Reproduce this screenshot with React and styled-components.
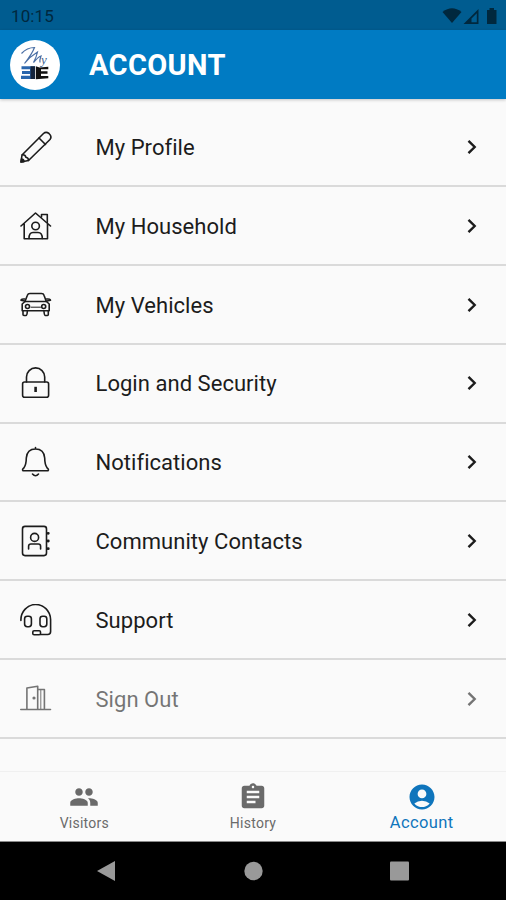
import React from 'react'
import styled, { createGlobalStyle } from 'styled-components'
import { MdPeople, MdAssignment, MdAccountCircle } from 'react-icons/md'

const GlobalStyle = createGlobalStyle`
  * {
    box-sizing: border-box;
  }

  body {
    margin: 0;
    background-color: #fafafa;
    font-family: Roboto, 'Liberation Sans', sans-serif;
  }
`

const Screen = styled.div`
  display: flex;
  flex-direction: column;
  width: 506px;
  height: 900px;
  overflow: hidden;
  background-color: #fafafa;
`

const StatusBar = styled.div`
  display: flex;
  align-items: center;
  justify-content: space-between;
  height: 30px;
  flex: none;
  padding: 2px 8px 0 11px;
  background-color: #005c90;
  color: #00283e;
`

const Clock = styled.span`
  font-size: 17px;
  letter-spacing: 0.1px;
`

const StatusIcons = styled.svg`
  width: 56px;
  height: 18px;
  fill: currentColor;
`

const Header = styled.header`
  display: flex;
  align-items: center;
  height: 69px;
  flex: none;
  padding: 0 10px;
  background-color: #007bc3;
  box-shadow: 0 1px 3px rgba(0, 0, 0, 0.22);
`

const Logo = styled.svg`
  width: 50px;
  height: 50px;
  flex: none;
`

const Title = styled.h1`
  margin: 0 0 0 29px;
  font-size: 29px;
  line-height: 34px;
  font-weight: 700;
  letter-spacing: 0.35px;
  color: #fff;
`

const Menu = styled.ul`
  flex: 1;
  margin: 0;
  padding: 9.4px 0 0;
  list-style: none;
`

const MenuItem = styled.li`
  display: flex;
  align-items: center;
  height: 78.8px;
  padding: 2.4px 24px 0 20px;
  border-bottom: 2px solid #dadada;
  color: #1c1c1c;

  > * {
    opacity: ${({ $muted }) => ($muted ? 0.6 : 1)};
  }
`

const ItemIcon = styled.svg`
  width: 32px;
  height: 32px;
  flex: none;
  margin-bottom: 2px;
  fill: none;
  stroke: currentColor;
  stroke-width: 1.6;
  stroke-linecap: round;
  stroke-linejoin: round;
`

const ItemLabel = styled.span`
  flex: 1;
  margin-left: 43.5px;
  font-size: 22px;
  line-height: 26px;
  letter-spacing: 0.04px;
`

const Chevron = styled.svg`
  width: 20px;
  height: 20px;
  margin-bottom: 2px;
  fill: none;
  stroke: currentColor;
  stroke-width: 2.4;
`

const TabBar = styled.nav`
  display: grid;
  grid-template-columns: repeat(3, 1fr);
  height: 71px;
  flex: none;
  border-top: 1px solid #f0f0f0;
  border-bottom: 1px solid #8a8a8a;
`

const Tab = styled.div`
  display: flex;
  flex-direction: column;
  align-items: center;
  padding-top: 10px;
  color: ${({ $active }) => ($active ? '#0f75bc' : '#6a6a6a')};

  svg {
    width: 30px;
    height: 30px;
  }
`

const TabLabel = styled.span`
  margin-top: 1px;
  font-size: ${({ $active }) => ($active ? '16.5px' : '14px')};
  line-height: 20px;
  letter-spacing: ${({ $active }) => ($active ? '0.4px' : '0.25px')};
`

const SystemNav = styled.div`
  display: flex;
  align-items: center;
  justify-content: space-between;
  height: 58px;
  flex: none;
  padding: 0 96px;
  background-color: #000;

  svg {
    width: 20px;
    height: 22px;
    fill: #999;
  }
`

const PencilIcon = () => (
  <ItemIcon viewBox="0 0 32 32">
    <path d="M1 31L2 24L23.5 2.5Q26 .3 29 2.5Q32.3 5.5 30 8.5L8.5 29.5Z" />
    <path d="M19 7L25.5 13.5M2.3 23.8Q5.5 23.6 5.8 26.2Q8.6 26.5 8.5 29.5" />
    <path d="M1 31L1.5 28Q4 28.3 4 30.6Z" fill="currentColor" />
  </ItemIcon>
)

const HouseIcon = () => (
  <ItemIcon viewBox="0 0 32 32">
    <path d="M1 16L15.5 3L30.5 16M4.2 14V28.8H27.5V14" />
    <path d="M21.5 7V4.5H27.3V12.5" />
    <circle cx="15.6" cy="16" r="3.8" />
    <path d="M9 28.5Q9 22.5 13 22.5H18Q22.3 22.5 22.3 28.5" />
  </ItemIcon>
)

const CarIcon = () => (
  <ItemIcon viewBox="0 0 32 32">
    <path d="M5 12.5L7.4 6.3Q8 4.5 10 4.5H21.5Q23.5 4.5 24 6.3L26.3 12.5" />
    <path d="M5 12.5H26.5L29.2 15V21.8H2.2V15Z" />
    <path d="M4.5 12L1 11.2Q1 9.7 4.8 10M26.8 12L30.5 11.2Q30.5 9.7 26.6 10" />
    <path d="M3 22V25.5Q3 26.5 4 26.5H6Q7 26.5 7.3 22.5M24 22.5Q24.4 26.5 25.3 26.5H27.4Q28.3 26.5 28.3 25.5V22" />
    <path d="M11 18.2H20.5" strokeWidth="1" />
    <circle cx="7.5" cy="17.5" r="2" />
    <circle cx="23.7" cy="17.5" r="2" />
  </ItemIcon>
)

const LockIcon = () => (
  <ItemIcon viewBox="0 0 32 32">
    <rect x="2.6" y="15" width="26" height="15.3" rx="2" />
    <path d="M6.5 15V10A9.1 9.1 0 0 1 24.7 10V15" />
    <path d="M15.6 19.8V25" strokeWidth="2.6" strokeLinecap="butt" />
  </ItemIcon>
)

const BellIcon = () => (
  <ItemIcon viewBox="0 0 32 32">
    <path d="M15.5 1.5V2.5M3 24.8Q1.8 23.4 3.8 22Q6.3 18.5 6.3 12Q7 3 15.5 3Q24 3 24.7 12Q24.7 18.5 27.2 22Q29.2 23.4 28 24.8Z" />
    <path d="M12.5 28Q15.5 31.4 18.5 28" />
  </ItemIcon>
)

const ContactsIcon = () => (
  <ItemIcon viewBox="0 0 32 32">
    <rect x="2.5" y="1.4" width="24" height="29.2" rx="2.5" />
    <circle cx="14.6" cy="12.4" r="4" />
    <path d="M8.6 24V21.2Q8.6 19 11 19H18.2Q20.6 19 20.6 21.2V24" />
    <path d="M28 8.3H28.3M28 16H28.3M28 23.7H28.3" strokeWidth="2.8" />
  </ItemIcon>
)

const HeadsetIcon = () => (
  <ItemIcon viewBox="0 0 32 32">
    <path d="M.9 16.5A14.85 15.5 0 0 1 30.6 15.5V27.5Q30.6 30.5 27.6 30.5H20.5" />
    <rect x="4.6" y="12.2" width="6.8" height="10.5" rx="2.6" />
    <rect x="20" y="12.2" width="6.8" height="10.5" rx="2.6" />
    <rect x="12.8" y="26.8" width="7.7" height="4" rx="1.3" />
  </ItemIcon>
)

const DoorIcon = () => (
  <ItemIcon viewBox="0 0 32 32">
    <path d="M.8 26.5H30.5M6.9 26.3V5L17.7 3.2V26.3M17.8 6.5H24.4V26.3" />
    <path d="M20.8 6.5V26" strokeWidth="1" />
    <circle cx="14" cy="15" r=".8" />
  </ItemIcon>
)

const menu = [
  { label: 'My Profile', Icon: PencilIcon },
  { label: 'My Household', Icon: HouseIcon },
  { label: 'My Vehicles', Icon: CarIcon },
  { label: 'Login and Security', Icon: LockIcon },
  { label: 'Notifications', Icon: BellIcon },
  { label: 'Community Contacts', Icon: ContactsIcon },
  { label: 'Support', Icon: HeadsetIcon },
  { label: 'Sign Out', Icon: DoorIcon, muted: true },
]

const tabs = [
  { label: 'Visitors', Icon: MdPeople },
  { label: 'History', Icon: MdAssignment },
  { label: 'Account', Icon: MdAccountCircle, active: true },
]

const BrandLogo = () => (
  <Logo viewBox="0 0 50 50">
    <circle cx="25" cy="25" r="25" fill="#fff" />
    <path
      d="M11.5 13.5Q17 7.5 24.5 7.5Q22 14 14.5 23.5Q20 16.5 27.5 12Q26.5 17 23.5 22.5Q28 17 31 16Q29.5 20 30 22.5"
      fill="none"
      stroke="#4a6fa5"
      strokeWidth="1.2"
    />
    <text x="31" y="24" fontSize="13" fontStyle="italic" fontFamily="Liberation Serif, serif" fill="#3c6293">y</text>
    <path d="M11.5 26.3H25V39H11V35.8H20V34H12V31H20V29.2H11.5Z" fill="#2a66ad" />
    <path d="M20.5 26.3H25V39H20.5Z" fill="#14243c" />
    <path d="M25.8 26.3L29.5 27.5L38.3 26.8V29.3H31V31.2H37.5V33.8H31V36H38.3V38.3L25.8 39.3Z" fill="#111" />
  </Logo>
)

const App = () => {
  return (
    <>
      <GlobalStyle />
      <Screen>
        <StatusBar>
          <Clock>10:15</Clock>
          <StatusIcons viewBox="0 0 56 18">
            <path d="M0.5 5Q10 -2.5 19.5 5L10 16Z" />
            <path fillRule="evenodd" d="M21.5 17L36.5 2V17ZM29.5 15.3H34.8V6.2L29.5 11.5Z" />
            <path d="M45 3H47.5V1H52V3H54.5V17H45Z" />
          </StatusIcons>
        </StatusBar>
        <Header>
          <BrandLogo />
          <Title>ACCOUNT</Title>
        </Header>
        <Menu>
          {menu.map(({ label, Icon, muted }) => (
            <MenuItem key={label} $muted={muted}>
              <Icon />
              <ItemLabel>{label}</ItemLabel>
              <Chevron viewBox="0 0 20 20">
                <path d="M6.5 3.8L12.7 10L6.5 16.2" />
              </Chevron>
            </MenuItem>
          ))}
        </Menu>
        <TabBar>
          {tabs.map(({ label, Icon, active }) => (
            <Tab key={label} $active={active}>
              <Icon />
              <TabLabel $active={active}>{label}</TabLabel>
            </Tab>
          ))}
        </TabBar>
        <SystemNav>
          <svg viewBox="0 0 20 22"><path d="M1 11L19 1V21Z" /></svg>
          <svg viewBox="0 0 20 22"><circle cx="10.5" cy="11" r="9.2" /></svg>
          <svg viewBox="0 0 20 22"><rect x="0" y="1.5" width="19" height="19" rx="1" /></svg>
        </SystemNav>
      </Screen>
    </>
  )
}

export default App
